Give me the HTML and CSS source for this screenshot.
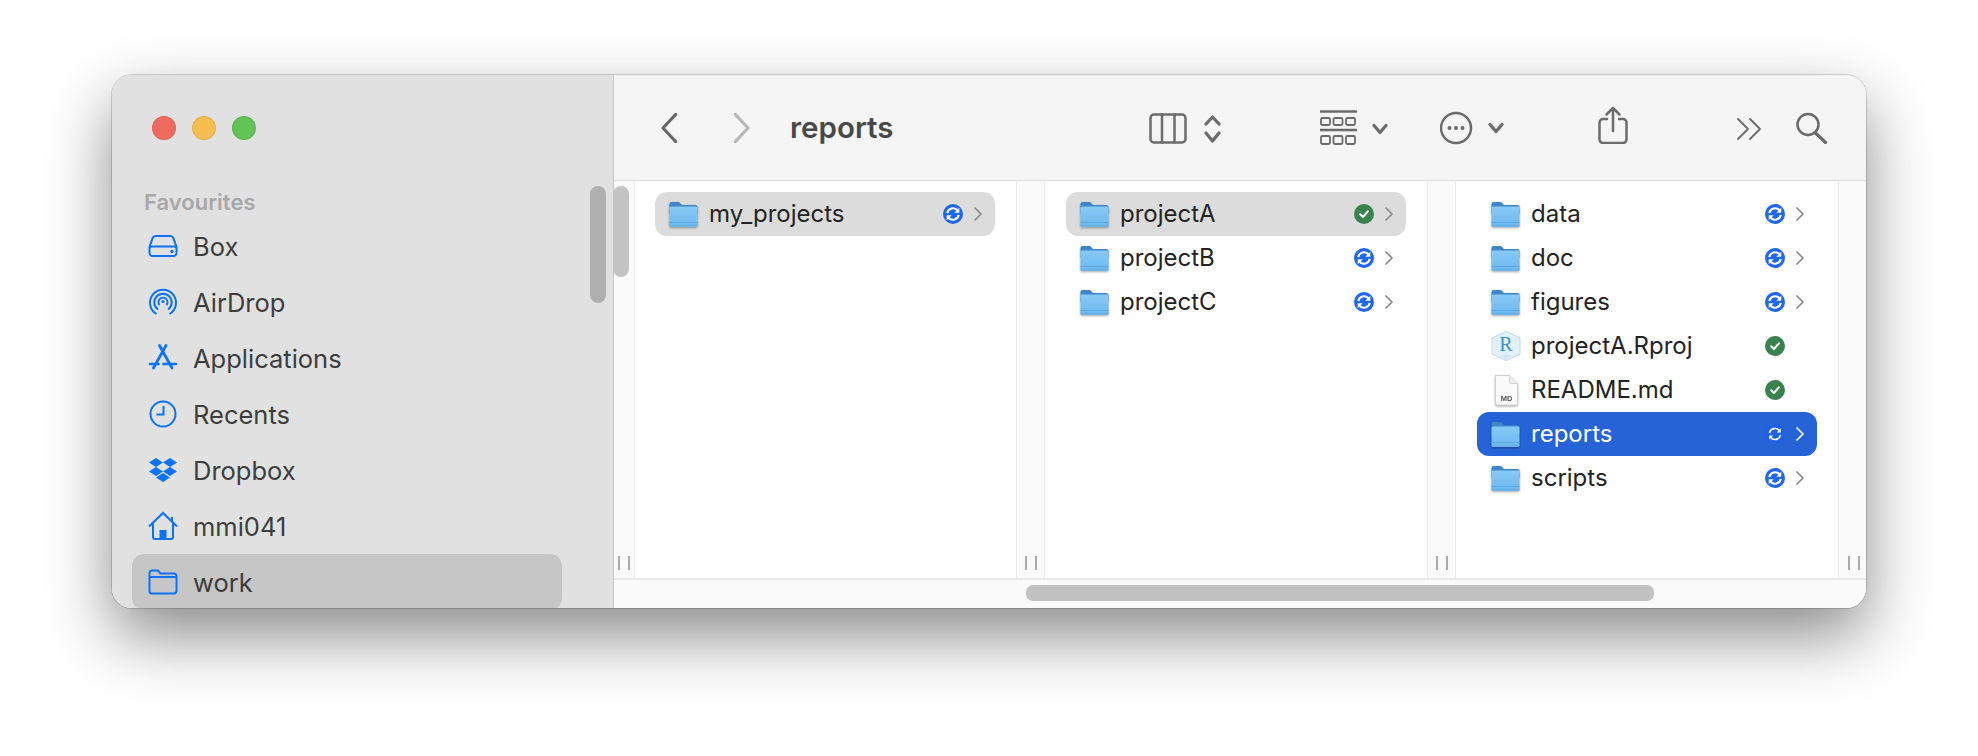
FILE: index.html
```html
<!doctype html>
<html>
<head>
    <title>reports</title>
    <meta charset="utf-8">
    <link rel="stylesheet" href="styles.css">
</head>
<body>
<svg class="defs" width="0" height="0">
    <defs>
        <linearGradient id="folder-front" x1="0" y1="0" x2="0" y2="1">
            <stop offset="0" stop-color="#86caf7"/>
            <stop offset="1" stop-color="#6db7ee"/>
        </linearGradient>
        <symbol id="folder" viewBox="0 0 29 27">
            <path d="M0.5 3a2 2 0 0 1 2-2h7.500l3 3h13a2.500 2.500 0 0 1 2.500 2.500v6h-28z" fill="#3f86c8"/>
            <rect x="0.500" y="5.500" width="28" height="20.500" rx="1.500" fill="url(#folder-front)"/>
            <rect x="0.500" y="21" width="28" height="1" fill="#5da6dd"/>
            <rect x="0.500" y="24" width="28" height="1" fill="#5da6dd" opacity=".6"/>
        </symbol>
        <symbol id="sync" viewBox="0 0 20 20">
            <path d="M4.300 9.200a5.800 5.800 0 0 1 10.300-2.700M15.700 10.800a5.800 5.800 0 0 1-10.300 2.700" fill="none" stroke="#fff" stroke-width="2.100"/>
            <path d="M16.300 3.800v5h-5zM3.700 16.200v-5h5z" fill="#fff"/>
        </symbol>
        <symbol id="sync-thin" viewBox="0 0 20 20">
            <path d="M4.500 9.200a5.600 5.600 0 0 1 10-2.500M15.500 10.800a5.600 5.600 0 0 1-10 2.500" fill="none" stroke="#fff" stroke-width="1.600"/>
            <path d="M15.800 4.500v4h-4zM4.200 15.500v-4h4z" fill="#fff"/>
        </symbol>
        <symbol id="check" viewBox="0 0 20 20">
            <path d="M6.200 10.300l2.700 2.700 5-5.600" fill="none" stroke="#fff" stroke-width="2" stroke-linecap="round" stroke-linejoin="round"/>
        </symbol>
        <symbol id="chevron" viewBox="0 0 8 14">
            <path d="M1 1l6 6-6 6" fill="none" stroke="currentColor" stroke-width="1.700" stroke-linecap="round" stroke-linejoin="round"/>
        </symbol>
    </defs>
</svg>

<div class="window">
    <aside class="sidebar">
        <div class="lights">
            <span class="light red"></span>
            <span class="light yellow"></span>
            <span class="light green"></span>
        </div>
        <div class="side-title">Favourites</div>
        <div class="side-row">
            <svg class="side-icon" viewBox="0 0 30 30"><path d="M7.500 5h15a3 3 0 0 1 2.800 1.900l3.200 9.100v6a3 3 0 0 1-3 3h-21a3 3 0 0 1-3-3v-6l3.200-9.100A3 3 0 0 1 7.500 5zM1.800 17.500a2 2 0 0 1 2-2h22.400a2 2 0 0 1 2 2" fill="none" stroke="currentColor" stroke-width="2"/><circle cx="24" cy="20.500" r="1.700" fill="currentColor"/></svg>
            <span>Box</span>
        </div>
        <div class="side-row">
            <svg class="side-icon" viewBox="0 0 30 30" fill="none" stroke="currentColor" stroke-width="2"><path d="M8.500 27a13 13 0 1 1 13 0"/><path d="M10 22.500a8.700 8.700 0 1 1 10 0"/><path d="M11.500 18a4.500 4.500 0 1 1 7 0"/><circle cx="15" cy="14.500" r="1.600" fill="currentColor" stroke="none"/></svg>
            <span>AirDrop</span>
        </div>
        <div class="side-row">
            <svg class="side-icon" viewBox="0 0 30 30" fill="none" stroke="currentColor" stroke-width="2.700" stroke-linecap="round"><path d="M11.500 2.500L24 25"/><path d="M18 2.500L5.500 25"/><path d="M2 21h8.500"/><path d="M15.500 21H28"/></svg>
            <span>Applications</span>
        </div>
        <div class="side-row">
            <svg class="side-icon" viewBox="0 0 30 30" fill="none" stroke="currentColor" stroke-width="2"><circle cx="15" cy="15" r="12.500"/><path d="M15.500 7v8.500H8.500"/></svg>
            <span>Recents</span>
        </div>
        <div class="side-row">
            <svg class="side-icon" viewBox="0 0 30 30" fill="currentColor"><path d="M8 3l7 4.500L8 12 1 7.500zM22 3l7 4.500L22 12l-7-4.500zM8 12l7 4.500L8 21l-7-4.500zM22 12l7 4.500L22 21l-7-4.500zM15 18l7 4.500-7 4.500-7-4.500z"/></svg>
            <span>Dropbox</span>
        </div>
        <div class="side-row">
            <svg class="side-icon" viewBox="0 0 30 30" fill="none" stroke="currentColor" stroke-width="2"><path d="M1 15.500L15 2l14 13.500"/><path d="M24 6V10"/><path d="M5 12.500V26a2 2 0 0 0 2 2h16a2 2 0 0 0 2-2V12.500"/><path d="M11.500 28V19h7v9z" fill="currentColor" stroke="none"/></svg>
            <span>mmi041</span>
        </div>
        <div class="side-row selected">
            <svg class="side-icon" viewBox="0 0 30 30" fill="none" stroke="currentColor" stroke-width="2"><path d="M1.500 6a2.500 2.500 0 0 1 2.500-2.500h6l2.500 3h13.500a2.500 2.500 0 0 1 2.500 2.500v15a2.500 2.500 0 0 1-2.500 2.500H4a2.500 2.500 0 0 1-2.500-2.500z"/><path d="M1.500 10h27"/></svg>
            <span>work</span>
        </div>
        <div class="side-thumb"></div>
    </aside>

    <main class="main">
        <header class="toolbar">
            <svg class="nav back" width="16" height="30" viewBox="0 0 16 30"><path d="M15 1L2 15l13 14"/></svg>
            <svg class="nav forward" width="16" height="30" viewBox="0 0 16 30"><path d="M1 1l13 14L1 29"/></svg>
            <h1 class="title">reports</h1>
            <svg class="tool tool-view" width="72" height="32" viewBox="0 0 72 32">
                <rect x="1.500" y="2.500" width="35" height="28" rx="3.500"/>
                <path d="M13 2.500v28M25.500 2.500v28"/>
                <path class="bold" d="M57 12l6.500-7 6.500 7M57 21l6.500 8 6.500-8"/>
            </svg>
            <svg class="tool tool-group" width="68" height="36" viewBox="0 0 68 36">
                <path d="M0 1.500h36M0 20h36"/>
                <g class="thin">
                    <rect x="1" y="8" width="9" height="7" rx="1.500"/><rect x="13.500" y="8" width="9" height="7" rx="1.500"/><rect x="26" y="8" width="9" height="7" rx="1.500"/>
                    <rect x="1" y="26" width="9" height="8" rx="1.500"/><rect x="13.500" y="26" width="9" height="8" rx="1.500"/><rect x="26" y="26" width="9" height="8" rx="1.500"/>
                </g>
                <path class="bold" d="M54 15.500l6 7 6-7"/>
            </svg>
            <svg class="tool tool-action" width="64" height="34" viewBox="0 0 64 34">
                <circle cx="16" cy="17" r="15"/>
                <circle class="dot" cx="9.500" cy="17" r="2"/><circle class="dot" cx="16" cy="17" r="2"/><circle class="dot" cx="22.500" cy="17" r="2"/>
                <path class="bold" d="M50 13.500l6 7 6-7"/>
            </svg>
            <svg class="tool tool-share" width="30" height="38" viewBox="0 0 30 38">
                <path d="M9 13H5a3.500 3.500 0 0 0-3.500 3.500v17A3.500 3.500 0 0 0 5 37h20a3.500 3.500 0 0 0 3.500-3.500v-17A3.500 3.500 0 0 0 25 13h-4"/>
                <path d="M15 2v23M8.500 8.500L15 2l6.500 6.500"/>
            </svg>
            <svg class="tool tool-more" width="24" height="22" viewBox="0 0 24 22">
                <path class="thin" d="M1 1l10 10L1 21M13 1l10 10-10 10"/>
            </svg>
            <svg class="tool tool-search" width="32" height="32" viewBox="0 0 32 32">
                <circle cx="12" cy="12.500" r="10.500"/>
                <path class="bold" d="M19.500 21L29.500 30.500"/>
            </svg>
        </header>

        <section class="browser">
            <div class="gutter gutter-first">
                <span class="handle"></span>
                <div class="gutter-thumb"></div>
            </div>

            <div class="pane pane-first">
                <div class="list">
                    <div class="row active">
                        <svg class="file"><use href="#folder"/></svg>
                        <span>my_projects</span>
                        <svg class="badge sync"><use href="#sync"/></svg>
                        <svg class="chev"><use href="#chevron"/></svg>
                    </div>
                </div>
                <div class="gutter"><span class="handle"></span></div>
            </div>

            <div class="pane">
                <div class="list">
                    <div class="row active">
                        <svg class="file"><use href="#folder"/></svg>
                        <span>projectA</span>
                        <svg class="badge done"><use href="#check"/></svg>
                        <svg class="chev"><use href="#chevron"/></svg>
                    </div>
                    <div class="row">
                        <svg class="file"><use href="#folder"/></svg>
                        <span>projectB</span>
                        <svg class="badge sync"><use href="#sync"/></svg>
                        <svg class="chev"><use href="#chevron"/></svg>
                    </div>
                    <div class="row">
                        <svg class="file"><use href="#folder"/></svg>
                        <span>projectC</span>
                        <svg class="badge sync"><use href="#sync"/></svg>
                        <svg class="chev"><use href="#chevron"/></svg>
                    </div>
                </div>
                <div class="gutter"><span class="handle"></span></div>
            </div>

            <div class="pane pane-last">
                <div class="list">
                    <div class="row">
                        <svg class="file"><use href="#folder"/></svg>
                        <span>data</span>
                        <svg class="badge sync"><use href="#sync"/></svg>
                        <svg class="chev"><use href="#chevron"/></svg>
                    </div>
                    <div class="row">
                        <svg class="file"><use href="#folder"/></svg>
                        <span>doc</span>
                        <svg class="badge sync"><use href="#sync"/></svg>
                        <svg class="chev"><use href="#chevron"/></svg>
                    </div>
                    <div class="row">
                        <svg class="file"><use href="#folder"/></svg>
                        <span>figures</span>
                        <svg class="badge sync"><use href="#sync"/></svg>
                        <svg class="chev"><use href="#chevron"/></svg>
                    </div>
                    <div class="row">
                        <svg class="file rproj" viewBox="0 0 30 30">
                            <path d="M15 .5L29 7v16l-14 6.500L1 23V7z" fill="#e2f1fb" stroke="#bcdaee"/>
                            <path d="M1 7l14 6.500L29 7M15 13.500v16" fill="none" stroke="#cfe5f4" stroke-width=".7"/>
                            <text x="15" y="20" class="rproj-r">R</text>
                            <path d="M10 25h9M13 27h3" stroke="#b6d3e6" stroke-width=".8"/>
                        </svg>
                        <span>projectA.Rproj</span>
                        <svg class="badge done"><use href="#check"/></svg>
                    </div>
                    <div class="row">
                        <svg class="file doc" viewBox="0 0 30 32">
                            <path d="M4.500 1.500h14l8 8v20a1.500 1.500 0 0 1-1.500 1.500H6a1.500 1.500 0 0 1-1.500-1.500z" fill="#fbfbfb" stroke="#d2d2d2"/>
                            <path d="M18.500 1.500v6.500a1.500 1.500 0 0 0 1.500 1.500h6.500" fill="#eee" stroke="#d2d2d2"/>
                            <text x="15.500" y="27" class="doc-ext">MD</text>
                        </svg>
                        <span>README.md</span>
                        <svg class="badge done"><use href="#check"/></svg>
                    </div>
                    <div class="row current">
                        <svg class="file"><use href="#folder"/></svg>
                        <span>reports</span>
                        <svg class="badge sync"><use href="#sync-thin"/></svg>
                        <svg class="chev"><use href="#chevron"/></svg>
                    </div>
                    <div class="row">
                        <svg class="file"><use href="#folder"/></svg>
                        <span>scripts</span>
                        <svg class="badge sync"><use href="#sync"/></svg>
                        <svg class="chev"><use href="#chevron"/></svg>
                    </div>
                </div>
                <div class="gutter"><span class="handle"></span></div>
            </div>
        </section>

        <footer class="hscroll">
            <div class="hscroll-thumb"></div>
        </footer>
    </main>
</div>
</body>
</html>
```

FILE: styles.css
```css
html, body {
    height: 100%;
}

body {
    margin: 0;
    padding: 75px 0 0 112px;
    box-sizing: border-box;
    background: #fff;
    font: 24px 'Inter', 'Liberation Sans', sans-serif;
    color: #232323;
    overflow: hidden;
}

.defs {
    position: absolute;
}

.window {
    display: flex;
    width: 1754px;
    height: 533px;
    border-radius: 20px;
    overflow: hidden;
    background: #fff;
    box-shadow: 0 0 0 1px rgba(0,0,0,0.16), 0 28px 66px 0 rgba(0,0,0,0.46);
}

/* sidebar */

.sidebar {
    position: relative;
    flex: 0 0 502px;
    box-sizing: border-box;
    padding: 41px 0 0 20px;
    background: #e1e1e1;
    border-right: 1px solid #c6c6c6;
    color: #3d3d3d;
    font-size: 25.500px;
}

.lights {
    display: flex;
    gap: 16px;
    padding-left: 20px;
}

.light {
    width: 22px;
    height: 22px;
    border-radius: 50%;
    border: 1px solid rgba(0,0,0,0.08);
}

.red { background: #ee6a5f; }
.yellow { background: #f5bd4f; }
.green { background: #61c454; }

.side-title {
    margin: 48px 0 2px 12px;
    height: 28px;
    font-size: 22px;
    font-weight: 600;
    line-height: 28px;
    color: #a8a8a8;
}

.side-row {
    display: flex;
    align-items: center;
    gap: 15px;
    width: 430px;
    height: 56px;
    padding-left: 16px;
    box-sizing: border-box;
    border-radius: 12px;
}

.side-row.selected {
    background: #c6c6c6;
}

.side-icon {
    flex: 0 0 30px;
    height: 30px;
    color: #0a72f7;
}

.side-thumb {
    position: absolute;
    left: 478px;
    top: 111px;
    width: 16px;
    height: 117px;
    border-radius: 8px;
    background: #b0b0b0;
}

/* toolbar */

.main {
    flex: 1;
    display: flex;
    flex-direction: column;
    min-width: 0;
}

.toolbar {
    flex: 0 0 106px;
    display: flex;
    align-items: center;
    box-sizing: border-box;
    padding-left: 47px;
    background: #f5f5f5;
    border-bottom: 1px solid #dcdcdc;
}

.nav {
    fill: none;
    stroke-width: 3;
    stroke-linecap: round;
    stroke-linejoin: round;
}

.back { stroke: #666; }
.forward { stroke: #b6b6b6; margin-left: 57px; }

.title {
    flex: 0 0 359px;
    margin: -2px 0 0 40px;
    font-size: 29.500px;
    font-weight: 600;
    color: #484848;
}

.tool {
    fill: none;
    stroke: #6b6b6b;
    stroke-width: 2.5;
    stroke-linecap: round;
    stroke-linejoin: round;
}

.tool .bold { stroke-width: 3.2; }
.tool .thin { stroke-width: 1.8; }
.tool .dot { fill: #6b6b6b; stroke: none; }

.tool-group { margin-left: 99px; }
.tool-action { margin-left: 52px; }
.tool-share { margin: 0 0 5px 94px; }
.tool-more { margin: 3px 0 0 109px; }
.tool-search { margin-left: 35px; }

/* column browser */

.browser {
    flex: 1;
    display: flex;
    min-height: 0;
}

.pane {
    flex: 0 0 410px;
    display: flex;
}

.pane-first {
    flex-basis: 409px;
}

.pane-last {
    flex: 1;
}

.list {
    flex: 1;
    padding: 11px 21px 0 21px;
    min-width: 0;
}

.pane-first .list {
    padding-left: 20px;
}

.gutter {
    position: relative;
    flex: 0 0 29px;
    display: flex;
    align-items: flex-end;
    justify-content: center;
    box-sizing: border-box;
    padding-bottom: 8px;
    background: #fafafa;
    border-left: 1px solid #ececec;
    border-right: 1px solid #ececec;
}

.pane-last .gutter {
    flex-basis: 30px;
    border-right: 0;
}

.gutter-first {
    flex-basis: 21px;
    border-left: 0;
}

.handle {
    width: 8px;
    height: 14px;
    border-left: 2px solid #ababab;
    border-right: 2px solid #ababab;
}

.gutter-thumb {
    position: absolute;
    left: -1px;
    top: 5px;
    width: 16px;
    height: 91px;
    border-radius: 8px;
    background: #c3c3c3;
}

.row {
    display: grid;
    grid-template-columns: 29px 1fr 20px 8px;
    column-gap: 11px;
    align-items: center;
    width: 340px;
    height: 44px;
    padding: 0 13px 0 14px;
    box-sizing: border-box;
    border-radius: 12px;
    color: #232323;
}

.row span {
    margin-top: -2px;
}

.row.active {
    background: #dcdcdc;
}

.row.current {
    background: #2563d6;
    color: #fff;
}

.file {
    width: 29px;
    height: 27px;
    filter: drop-shadow(0 1px 1px rgba(0,0,0,0.35));
}

.rproj {
    width: 30px;
    height: 30px;
    filter: none;
}

.doc {
    width: 30px;
    height: 32px;
}

.rproj-r {
    font: 20px 'Liberation Serif', serif;
    text-anchor: middle;
    fill: #3d8fd1;
}

.doc-ext {
    font: bold 7.500px 'Liberation Sans', sans-serif;
    text-anchor: middle;
    fill: #555;
}

.badge {
    width: 20px;
    height: 20px;
    border-radius: 50%;
}

.badge.sync { background: #1f66f2; }
.badge.done { background: #3a8150; }
.current .badge.sync { background: #1f62e4; }

.chev {
    width: 8px;
    height: 14px;
    color: #8a8a8a;
}

.current .chev {
    color: #fff;
}

/* bottom scrollbar */

.hscroll {
    flex: 0 0 30px;
    box-sizing: border-box;
    padding: 5px 0 0 412px;
    background: #fafafa;
    border-top: 2px solid #e8e8e8;
}

.hscroll-thumb {
    width: 628px;
    height: 16px;
    border-radius: 7px;
    background: #c1c1c1;
}
```
